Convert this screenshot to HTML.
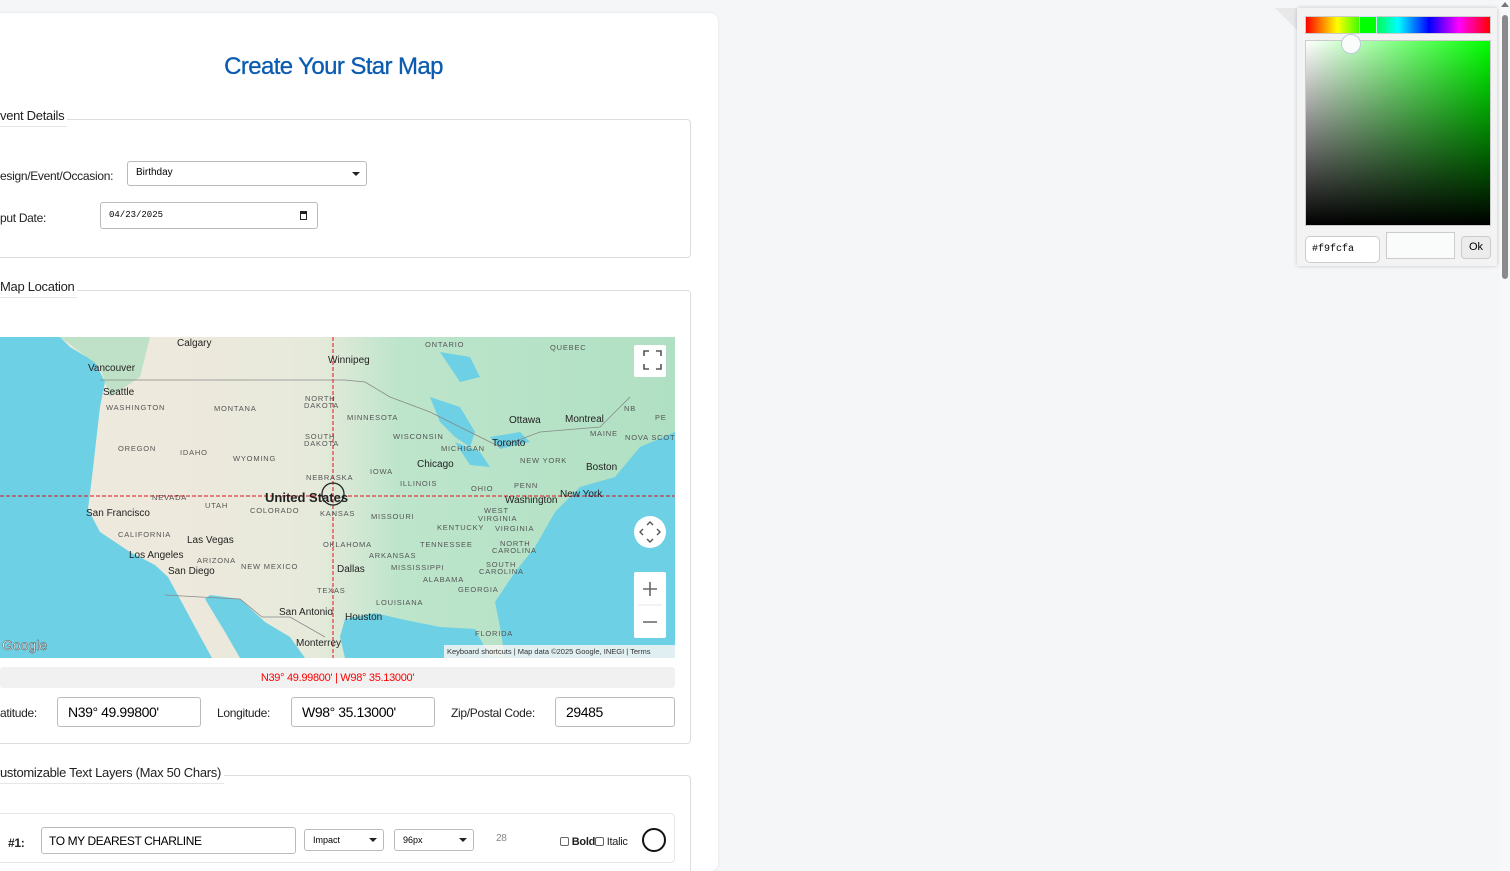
<!DOCTYPE html>
<html style="overflow:hidden"><head><meta charset="utf-8"><style>
*{box-sizing:border-box}
html,body{height:871px}
body{margin:0;width:1510px;overflow:hidden;background:#f5f6f8;font-family:"Liberation Sans",sans-serif;position:relative}
.card{position:absolute;left:-20px;top:13px;width:738px;height:858px;background:#fff;border-radius:8px;box-shadow:0 0 3px rgba(0,0,0,.08)}
.abs{position:absolute}
h1{position:absolute;left:0;width:667px;top:53px;margin:0;text-align:center;font-size:24px;font-weight:normal;color:#0b5cb0;letter-spacing:-.6px;-webkit-text-stroke:.3px #0b5cb0}
.fs{position:absolute;left:-10px;width:701px;border:1px solid #ddd;border-radius:4px}
.lg{position:absolute;left:0;background:#fff;font-size:13px;color:#222;padding-right:3px;border-bottom:1px solid #e6e6e6;padding-bottom:3px;letter-spacing:-.3px}
.lbl{position:absolute;font-size:12px;color:#222;letter-spacing:-.3px}
.inp{position:absolute;border:1px solid #bbb;border-radius:3px;background:#fff;font-size:14px;padding:6px 10px;color:#000;letter-spacing:-.4px}
.sel{position:absolute;border:1px solid #bbb;border-radius:3px;background:#fff;font-size:10px;padding:5px 8px;color:#000}
.dd:after{content:"";position:absolute;right:6px;top:50%;margin-top:-2px;border:4px solid transparent;border-top:4px solid #222;border-bottom:0}
.mt{font-size:7.5px;fill:#555;letter-spacing:.8px}
.mc{font-size:10px;fill:#222}
</style></head><body>
<div class="card"></div>
<h1>Create Your Star Map</h1>

<div class="fs" style="top:119px;height:139px"></div>
<div class="lg" style="top:108px">vent Details</div>
<div class="lbl" style="left:0;top:169px">esign/Event/Occasion:</div>
<div class="sel dd" style="left:127px;top:161px;width:240px;height:25px">Birthday</div>
<div class="lbl" style="left:0;top:211px">put Date:</div>
<div class="sel" style="left:100px;top:202px;width:218px;height:27px;font-family:'Liberation Mono',monospace;font-size:9px;padding-top:7px">04/23/2025<span style="position:absolute;right:10px;top:8px;width:7px;height:9px;border:1.3px solid #222;border-top-width:3px"></span></div>

<div class="fs" style="top:290px;height:454px"></div>
<div class="lg" style="top:279px">Map Location</div>

<svg class="abs" style="left:0;top:337px" width="675" height="321" viewBox="0 0 675 321">
<defs><linearGradient id="g" x1="0" x2="1" y1="0" y2="0"><stop offset="0.2" stop-color="#ede9dc"/><stop offset="0.42" stop-color="#e6eadb"/><stop offset="0.55" stop-color="#bde5cb"/><stop offset="1" stop-color="#b0e0c3"/></linearGradient></defs>
<rect width="675" height="321" fill="#6dd0e4"/>
<path d="M60,0 L70,10 L95,25 L105,45 L100,70 L96,105 L92,140 L88,172 L100,195 L130,215 L155,228 L168,240 L180,262 L195,290 L212,321 L240,321 L225,295 L205,262 L210,258 L240,262 L265,285 L290,300 L305,321 L345,321 L340,300 L345,282 L375,276 L405,283 L440,290 L475,292 L490,320 L505,321 L500,290 L495,265 L515,235 L535,210 L555,175 L580,150 L615,140 L640,110 L675,95 L675,0 Z" fill="url(#g)"/>
<path d="M60,0 L150,0 L140,40 L110,60 L100,30 Z" fill="#b3dfc2" opacity=".8"/>
<path d="M430,60 L460,70 L475,95 L470,110 L455,100 L440,85 Z M455,105 L480,115 L490,130 L470,128 Z M490,100 L520,95 L530,105 L500,112 Z M440,15 L470,20 L480,40 L460,45 Z" fill="#6dd0e4"/>
<path d="M100,43 L345,43 L365,45 L390,60 L430,75 L480,100 L500,110 L540,95 L600,90 L630,60" fill="none" stroke="#888" stroke-width=".8"/>
<path d="M165,258 L200,260 L240,262 L262,280 L290,280 L325,300" fill="none" stroke="#888" stroke-width=".8"/>
<line x1="333" y1="0" x2="333" y2="321" stroke="#e0111b" stroke-dasharray="4,2" stroke-width="1"/>
<line x1="0" y1="159" x2="675" y2="159" stroke="#e0111b" stroke-dasharray="4,2" stroke-width="1"/>
<circle cx="333" cy="157" r="11" fill="none" stroke="#222" stroke-width="1.3"/>
<g class="mc"><text x="177" y="9">Calgary</text><text x="88" y="34">Vancouver</text><text x="103" y="58">Seattle</text><text x="328" y="26">Winnipeg</text><text x="509" y="86">Ottawa</text><text x="565" y="85">Montreal</text><text x="492" y="109">Toronto</text><text x="417" y="130">Chicago</text><text x="586" y="133">Boston</text><text x="560" y="160">New York</text><text x="505" y="166">Washington</text><text x="86" y="179">San Francisco</text><text x="187" y="206">Las Vegas</text><text x="129" y="221">Los Angeles</text><text x="168" y="237">San Diego</text><text x="337" y="235">Dallas</text><text x="279" y="278">San Antonio</text><text x="345" y="283">Houston</text><text x="296" y="309">Monterrey</text></g>
<text x="265" y="165" font-size="13" font-weight="bold" fill="#222">United States</text>
<g class="mt"><text x="425" y="10">ONTARIO</text><text x="550" y="13">QUEBEC</text><text x="106" y="73">WASHINGTON</text><text x="214" y="74">MONTANA</text><text x="305" y="64">NORTH</text><text x="304" y="71">DAKOTA</text><text x="347" y="83">MINNESOTA</text><text x="393" y="102">WISCONSIN</text><text x="305" y="102">SOUTH</text><text x="304" y="109">DAKOTA</text><text x="118" y="114">OREGON</text><text x="180" y="118">IDAHO</text><text x="233" y="124">WYOMING</text><text x="441" y="114">MICHIGAN</text><text x="370" y="137">IOWA</text><text x="306" y="143">NEBRASKA</text><text x="400" y="149">ILLINOIS</text><text x="520" y="126">NEW YORK</text><text x="471" y="154">OHIO</text><text x="514" y="151">PENN</text><text x="152" y="163">NEVADA</text><text x="205" y="171">UTAH</text><text x="250" y="176">COLORADO</text><text x="320" y="179">KANSAS</text><text x="371" y="182">MISSOURI</text><text x="484" y="176">WEST</text><text x="478" y="184">VIRGINIA</text><text x="437" y="193">KENTUCKY</text><text x="495" y="194">VIRGINIA</text><text x="118" y="200">CALIFORNIA</text><text x="323" y="210">OKLAHOMA</text><text x="420" y="210">TENNESSEE</text><text x="500" y="209">NORTH</text><text x="492" y="216">CAROLINA</text><text x="197" y="226">ARIZONA</text><text x="369" y="221">ARKANSAS</text><text x="241" y="232">NEW MEXICO</text><text x="391" y="233">MISSISSIPPI</text><text x="486" y="230">SOUTH</text><text x="479" y="237">CAROLINA</text><text x="423" y="245">ALABAMA</text><text x="458" y="255">GEORGIA</text><text x="317" y="256">TEXAS</text><text x="376" y="268">LOUISIANA</text><text x="475" y="299">FLORIDA</text><text x="590" y="99">MAINE</text><text x="625" y="103">NOVA SCOT</text><text x="624" y="74">NB</text><text x="655" y="83">PE</text></g>
<text x="2" y="313" font-size="14" fill="#fff" stroke="#555" stroke-width=".5">Google</text>
<rect x="444" y="308" width="231" height="13" fill="#f5f5f5" opacity=".85"/>
<text x="447" y="317" font-size="7.5" fill="#333">Keyboard shortcuts  |  Map data ©2025 Google, INEGI  |  Terms</text>
<rect x="634" y="8" width="32" height="32" rx="2" fill="#fff"/>
<path d="M644,22v-5h5M656,17h5v5M661,30v5h-5M649,35h-5v-5" fill="none" stroke="#555" stroke-width="1.6" transform="translate(0,-3)"/>
<circle cx="650" cy="195" r="16" fill="#fff"/>
<path d="M647,188l3,-3l3,3M647,202l3,3l3,-3M643,192l-3,3l3,3M657,192l3,3l-3,3" fill="none" stroke="#555" stroke-width="1.4"/>
<rect x="634" y="235" width="32" height="66" rx="2" fill="#fff"/>
<line x1="638" y1="268" x2="662" y2="268" stroke="#e6e6e6"/>
<path d="M650,245v14M643,252h14M643,285h14" stroke="#666" stroke-width="1.6"/>
</svg>

<div class="abs" style="left:0;top:667px;width:675px;height:21px;background:#f1f1f1;border-radius:3px;text-align:center;font-size:11px;color:#f00;line-height:22px;letter-spacing:-.3px">N39° 49.99800' | W98° 35.13000'</div>
<div class="lbl" style="left:0;top:706px">atitude:</div>
<div class="inp" style="left:57px;top:697px;width:144px;height:30px">N39° 49.99800'</div>
<div class="lbl" style="left:217px;top:706px">Longitude:</div>
<div class="inp" style="left:291px;top:697px;width:144px;height:30px">W98° 35.13000'</div>
<div class="lbl" style="left:451px;top:706px">Zip/Postal Code:</div>
<div class="inp" style="left:555px;top:697px;width:120px;height:30px">29485</div>

<div class="fs" style="top:775px;height:120px"></div>
<div class="lg" style="top:765px">ustomizable Text Layers (Max 50 Chars)</div>
<div class="abs" style="left:-5px;top:813px;width:680px;height:50px;border:1px solid #e6e6e6;border-radius:4px"></div>
<div class="lbl" style="left:8px;top:836px;font-weight:bold">#1:</div>
<div class="inp" style="left:41px;top:827px;width:255px;height:27px;font-size:12px;padding:6px 7px">TO MY DEAREST CHARLINE</div>
<div class="sel dd" style="left:304px;top:829px;width:80px;height:22px;font-size:9px">Impact</div>
<div class="sel dd" style="left:394px;top:829px;width:80px;height:22px;font-size:9px">96px</div>
<div class="lbl" style="left:496px;top:833px;font-size:10px;color:#888">28</div>
<div class="lbl" style="left:560px;top:836px;font-size:11px"><span style="display:inline-block;width:9px;height:9px;border:1px solid #666;border-radius:2px;vertical-align:-1px"></span> <b>Bold</b><span style="display:inline-block;width:9px;height:9px;border:1px solid #666;border-radius:2px;vertical-align:-1px"></span> Italic</div>
<div class="abs" style="left:642px;top:828px;width:24px;height:24px;border-radius:50%;border:2.5px solid #111"></div>

<div class="abs" style="left:1275px;top:8px;width:0;height:0;border-left:22px solid transparent;border-top:22px solid #e8e8e8;border-right:0"></div>
<div class="abs" style="left:1297px;top:8px;width:200px;height:258px;background:#f3f3f3;box-shadow:0 0 4px rgba(0,0,0,.2)"></div>
<div class="abs" style="left:1305px;top:16px;width:186px;height:18px;border:1px solid #ccc;background:linear-gradient(90deg,#f00,#ff0 17%,#0f0 33%,#0ff 50%,#00f 67%,#f0f 83%,#f00)"></div>
<div class="abs" style="left:1359px;top:16px;width:18px;height:18px;border:1.5px solid #cfe3ff;background:#0f0"></div>
<div class="abs" style="left:1305px;top:40px;width:186px;height:186px;border:1px solid #ccc;background:linear-gradient(to bottom,rgba(0,0,0,0),#000),linear-gradient(to right,#fff,#0f0)"></div>
<div class="abs" style="left:1341px;top:34px;width:20px;height:20px;border-radius:50%;background:#f9fcfa;border:1px solid #bcd"></div>
<div class="abs" style="left:1305px;top:236px;width:75px;height:27px;background:#fff;border:1px solid #ccc;border-radius:5px;font-family:'Liberation Mono',monospace;font-size:10px;padding:7px 6px">#f9fcfa</div>
<div class="abs" style="left:1386px;top:232px;width:69px;height:27px;background:#f9fcfa;border:1px solid #ccc"></div>
<div class="abs" style="left:1461px;top:236px;width:30px;height:23px;background:#ececec;border:1px solid #ccc;border-radius:4px;font-size:11px;text-align:center;line-height:21px">Ok</div>
<div class="abs" style="left:1500px;top:0;width:10px;height:871px;background:#f8f8f8"></div>
<div class="abs" style="left:1502px;top:15px;width:6px;height:264px;background:#8a8a8a;border-radius:3px"></div>
<div class="abs" style="left:1501px;top:2px;border:4px solid transparent;border-bottom:5px solid #777;border-top:0"></div>
</body></html>
